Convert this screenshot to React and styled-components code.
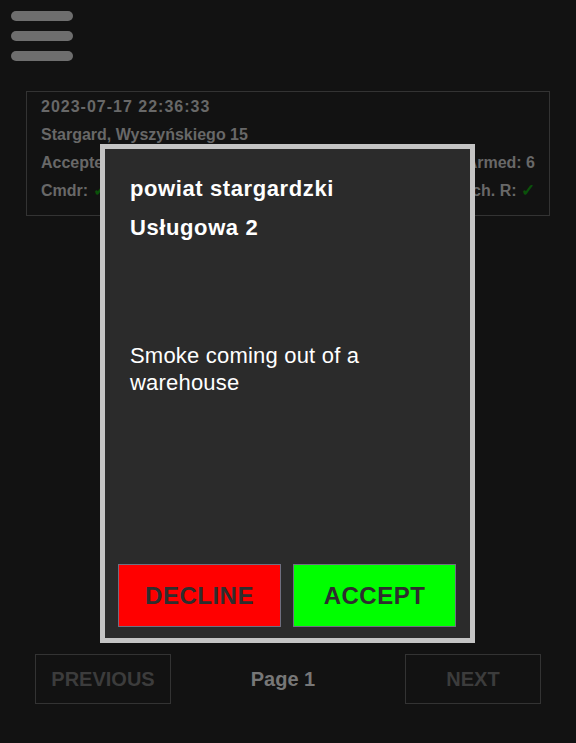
import React from "react";
import styled, { createGlobalStyle } from "styled-components";

const GlobalStyle = createGlobalStyle`
  html, body {
    margin: 0;
    padding: 0;
    background: #121212;
    font-family: "Liberation Sans", Arial, sans-serif;
  }
`;

const Page = styled.div`
  min-height: 743px;
  padding: 11px 26px 0 26px;
  box-sizing: border-box;
  position: relative;
`;

const Burger = styled.div`
  display: flex;
  flex-direction: column;
  gap: 10px;
  width: 62px;
  margin-left: -15px;
`;

const Bar = styled.span`
  display: block;
  height: 10px;
  border-radius: 5px;
  background: #6e6e6e;
`;

const Card = styled.div`
  margin-top: 30px;
  border: 1px solid #333;
  padding: 5px 14px 14px 14px;
  display: flex;
  flex-direction: column;
  gap: 8px;
  color: #686868;
  font-weight: bold;
  font-size: 16px;
`;

const Row = styled.div`
  display: flex;
  justify-content: space-between;
  line-height: 20px;
`;

const Stamp = styled.div`
  letter-spacing: 1px;
  line-height: 20px;
`;

const Check = styled.span`
  color: #0a520a;
  font-size: 17px;
`;

const Pager = styled.div`
  margin: 438px 9px 0 9px;
  display: flex;
  align-items: center;
  justify-content: space-between;
`;

const PageButton = styled.button`
  width: 136px;
  height: 50px;
  background: transparent;
  border: 1px solid #333;
  color: #3c3c3c;
  font-family: inherit;
  font-weight: bold;
  font-size: 20px;
`;

const PageLabel = styled.span`
  color: #777;
  font-weight: bold;
  font-size: 20px;
  margin-right: 10px;
`;

const Modal = styled.div`
  position: absolute;
  top: 144px;
  left: 100px;
  width: 375px;
  height: 499px;
  box-sizing: border-box;
  border: 5px solid #c4c4c4;
  background: #2b2b2b;
  display: flex;
  flex-direction: column;
  color: #fff;
`;

const ModalBody = styled.div`
  flex: 1;
  padding: 28px 25px 0 25px;
`;

const Heading = styled.div`
  font-weight: bold;
  font-size: 22px;
  letter-spacing: 0.6px;
  line-height: 24px;
  margin-bottom: 15px;
`;

const Description = styled.p`
  margin: 102px 0 0 0;
  font-size: 22px;
  line-height: 27px;
  letter-spacing: 0.2px;
  width: 310px;
`;

const Actions = styled.div`
  display: flex;
  gap: 12px;
  padding: 0 14px 11px 13px;
`;

const ActionButton = styled.button`
  flex: 1;
  height: 63px;
  background: ${(p) => p.$bg};
  border: 1px solid #6f6f80;
  color: #2e2e2e;
  font-family: inherit;
  font-weight: bold;
  font-size: 24px;
  letter-spacing: 0.5px;
  padding-top: 2px;
`;

export default function App() {
  return (
    <>
      <GlobalStyle />
      <Page>
        <Burger>
          <Bar />
          <Bar />
          <Bar />
        </Burger>
        <Card>
          <Stamp>2023-07-17 22:36:33</Stamp>
          <Row>
            <span>Stargard, Wyszyńskiego 15</span>
          </Row>
          <Row>
            <span>Accepted: 4</span>
            <span>Armed: 6</span>
          </Row>
          <Row>
            <span>
              Cmdr: <Check>✓</Check>
            </span>
            <span>
              Tech. R: <Check>✓</Check>
            </span>
          </Row>
        </Card>
        <Pager>
          <PageButton>PREVIOUS</PageButton>
          <PageLabel>Page 1</PageLabel>
          <PageButton>NEXT</PageButton>
        </Pager>
        <Modal>
          <ModalBody>
            <Heading>powiat stargardzki</Heading>
            <Heading>Usługowa 2</Heading>
            <Description>Smoke coming out of a warehouse</Description>
          </ModalBody>
          <Actions>
            <ActionButton $bg="#ff0000">DECLINE</ActionButton>
            <ActionButton $bg="#00ff00">ACCEPT</ActionButton>
          </Actions>
        </Modal>
      </Page>
    </>
  );
}
